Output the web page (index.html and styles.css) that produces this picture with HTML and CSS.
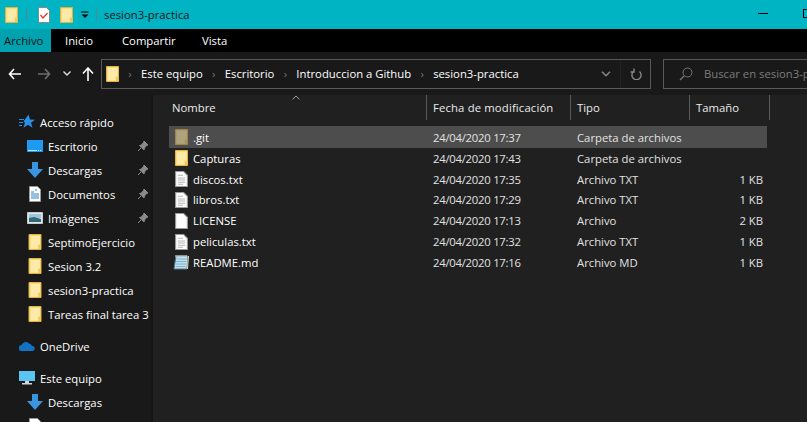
FILE: index.html
```html
<!DOCTYPE html>
<html lang="es">
<head>
  <meta charset="UTF-8">
  <title>sesion3-practica</title>
  <link rel="stylesheet" href="styles.css">
</head>
<body>

<svg class="defs" width="0" height="0">
  <symbol id="folder" viewBox="0 0 13 16">
    <path d="M.5.5h12v15H.5z" fill="#fbdc7c" stroke="#e0b545"/>
    <path d="M2 2h9.500v8H9.500v4.500H2z" fill="#fdeaa8"/>
    <path d="M10 11h2.500v4H10z" fill="#f2c95b"/>
  </symbol>
  <symbol id="txt" viewBox="0 0 12 15">
    <path d="M.5.5h7.500l3.500 3.500v10.500H.5z" fill="#fff" stroke="#9a9a9a"/>
    <path d="M2.500 4h5M2.500 6.500h7M2.500 8.500h7M2.500 10.500h7M2.500 12.500h5" stroke="#b5b5b5"/>
  </symbol>
  <symbol id="blank" viewBox="0 0 12 15">
    <path d="M.5.5h7.500l3.500 3.500v10.500H.5z" fill="#fff" stroke="#9a9a9a"/>
  </symbol>
  <symbol id="notepad" viewBox="0 0 16 16">
    <path d="M3 2h12l-1 13H1z" fill="#bfe0ee" stroke="#57768a"/>
    <path d="M3.500 5h10M3 7.500h10M3 10h10M2.500 12.500h10" stroke="#7fb2cc"/>
    <path d="M3 1v2M5 1v2M7 1v2M9 1v2M11 1v2M13 1v2" stroke="#ddd"/>
    <path d="M14 15l1-13h1l-1 13z" fill="#e8d9a8"/>
  </symbol>
  <symbol id="pin" viewBox="0 0 12 12">
    <path d="M7 1l4 4-1.500.5L7.500 8 7 10 2.500 5.500 4.500 5 6.500 2.500zM4 8l-3 3" fill="#8a8a8a" stroke="#8a8a8a"/>
  </symbol>
  <symbol id="down" viewBox="0 0 16 16">
    <path d="M5 0h6v7h5l-8 9-8-9h5z" fill="#3a95e0"/>
  </symbol>
</svg>

<header class="titlebar">
  <svg class="qa-icon"><use href="#folder"/></svg>
  <span class="qa-sep"></span>
  <svg class="qa-check" viewBox="0 0 12 16" width="12" height="16">
    <path d="M.5.5h8l3 3v12H.5z" fill="#fff" stroke="#888"/>
    <path d="M2.500 8l2.500 3 4.500-5" fill="none" stroke="#d8402a" stroke-width="1.300"/>
  </svg>
  <svg class="qa-icon qa-second"><use href="#folder"/></svg>
  <svg class="qa-drop" viewBox="0 0 8 8" width="8" height="8">
    <path d="M0 1h7.500" stroke="#000"/><path d="M.5 3.500h7L4 7z" fill="#000"/>
  </svg>
  <span class="qa-sep qa-sep-last"></span>
  <span class="title-text">sesion3-practica</span>
  <div class="win-btns">
    <span class="win-min"></span>
    <span class="win-max"></span>
  </div>
</header>

<nav class="tabs">
  <a class="tab tab-file">Archivo</a>
  <a class="tab tab-inicio">Inicio</a>
  <a class="tab tab-compartir">Compartir</a>
  <a class="tab">Vista</a>
</nav>

<div class="navbar">
  <svg class="nav-arrow" viewBox="0 0 13 12" width="13" height="12"><path d="M6 1L1.500 6 6 11M2 6h11" fill="none" stroke="#fff" stroke-width="1.600"/></svg>
  <svg class="nav-arrow nav-next" viewBox="0 0 13 12" width="13" height="12"><path d="M7 1l4.500 5L7 11M11 6H0" fill="none" stroke="#6e6e6e" stroke-width="1.600"/></svg>
  <svg class="nav-drop" viewBox="0 0 8 5" width="8" height="5"><path d="M.5.500L4 4 7.500.500" fill="none" stroke="#ddd" stroke-width="1.400"/></svg>
  <svg class="nav-up" viewBox="0 0 12 14" width="12" height="14"><path d="M1 6.500L6 1l5 5.500M6 1.500V14" fill="none" stroke="#fff" stroke-width="1.600"/></svg>

  <div class="address">
    <svg class="addr-folder"><use href="#folder"/></svg>
    <span class="crumb-sep">›</span>
    <span class="crumb">Este equipo</span>
    <span class="crumb-sep">›</span>
    <span class="crumb">Escritorio</span>
    <span class="crumb-sep">›</span>
    <span class="crumb">Introduccion a Github</span>
    <span class="crumb-sep">›</span>
    <span class="crumb">sesion3-practica</span>
    <svg class="addr-drop" viewBox="0 0 10 6" width="10" height="6"><path d="M1 .8L5 4.800 9 .8" fill="none" stroke="#888" stroke-width="1.500"/></svg>
    <span class="addr-refresh">
      <svg viewBox="0 0 12 13" width="12" height="13"><path d="M3 3.500a4.600 4.600 0 1 0 6 0M3.500 .5v3.500H0" transform="translate(.5 1)" fill="none" stroke="#888" stroke-width="1.400"/></svg>
    </span>
  </div>

  <div class="search">
    <svg viewBox="0 0 14 14" width="14" height="14"><circle cx="8.500" cy="5.500" r="4.500" fill="none" stroke="#777"/><path d="M5 9l-4 4" stroke="#6f7f6a" stroke-width="1.300"/></svg>
    <span>Buscar en sesion3-practica</span>
  </div>
</div>

<div class="main">
  <aside class="sidebar">
    <div class="nav-item lvl0 first">
      <svg class="nav-icon" viewBox="0 0 16 15"><path d="M9.500 0l1.500 5 5 .2-4 3 1.500 5-4.500-3-4.500 3 1.500-5-1.500-1.200z" fill="#2b8fe6"/><path d="M0 5h5M0 8h4M0 11h3" stroke="#2b8fe6"/></svg>
      <span>Acceso rápido</span>
    </div>
    <div class="nav-item lvl1">
      <svg class="nav-icon" viewBox="0 0 16 12"><path d="M0 0h16v12H0z" fill="#1e9bf0"/><path d="M1 10.500h14" stroke="#bfe6ff" stroke-dasharray="9 1 1 1 1"/></svg>
      <span>Escritorio</span>
      <svg class="pin"><use href="#pin"/></svg>
    </div>
    <div class="nav-item lvl1">
      <svg class="nav-icon"><use href="#down"/></svg>
      <span>Descargas</span>
      <svg class="pin"><use href="#pin"/></svg>
    </div>
    <div class="nav-item lvl1">
      <svg class="nav-icon" viewBox="0 0 16 16"><path d="M2.500.5h8l3 3v12h-11z" fill="#fff" stroke="#999"/><path d="M4 6h3M4 8h8M4 10h8M4 12h8M8 4h2" stroke="#2f7fc0"/></svg>
      <span>Documentos</span>
      <svg class="pin"><use href="#pin"/></svg>
    </div>
    <div class="nav-item lvl1">
      <svg class="nav-icon" viewBox="0 0 16 12"><path d="M.5.500h15v11H.5z" fill="#dfe7ee" stroke="#c8c8c8"/><path d="M2 2h12v4H2z" fill="#9fc4dd"/><path d="M2 6l5-1 7 2v3H2z" fill="#2f6a78"/></svg>
      <span>Imágenes</span>
      <svg class="pin"><use href="#pin"/></svg>
    </div>
    <div class="nav-item lvl1">
      <svg class="nav-icon"><use href="#folder"/></svg>
      <span>SeptimoEjercicio</span>
    </div>
    <div class="nav-item lvl1">
      <svg class="nav-icon"><use href="#folder"/></svg>
      <span>Sesion 3.2</span>
    </div>
    <div class="nav-item lvl1">
      <svg class="nav-icon"><use href="#folder"/></svg>
      <span>sesion3-practica</span>
    </div>
    <div class="nav-item lvl1">
      <svg class="nav-icon"><use href="#folder"/></svg>
      <span>Tareas final tarea 3</span>
    </div>
    <div class="nav-item lvl0 group">
      <svg class="nav-icon" viewBox="0 0 16 10"><path d="M3 10a3 3 0 0 1-.5-6A4.500 4.500 0 0 1 10 2.500 3.500 3.500 0 0 1 13 5a2.500 2.500 0 0 1 .5 5z" fill="#1273c4"/></svg>
      <span>OneDrive</span>
    </div>
    <div class="nav-item lvl0 group">
      <svg class="nav-icon" viewBox="0 0 16 14"><path d="M0 0h16v10H0z" fill="#5cc4f2"/><path d="M6 10h4v2H6zM3 12h10v1.500H3z" fill="#cfd8dc"/></svg>
      <span>Este equipo</span>
    </div>
    <div class="nav-item lvl1">
      <svg class="nav-icon"><use href="#down"/></svg>
      <span>Descargas</span>
    </div>
    <div class="nav-item lvl1">
      <svg class="nav-icon" viewBox="0 0 16 16"><path d="M2.500.5h8l3 3v12h-11z" fill="#fff" stroke="#999"/></svg>
    </div>
  </aside>

  <section class="content">
    <div class="col-head">
      <div class="col col-name">Nombre<svg class="sort" viewBox="0 0 8 5" width="8" height="5"><path d="M.5 4.500L4 1l3.500 3.500" fill="none" stroke="#999"/></svg></div>
      <div class="col col-date">Fecha de modificación</div>
      <div class="col col-type">Tipo</div>
      <div class="col col-size">Tamaño</div>
    </div>

    <div class="rows">
      <div class="row selected">
        <div class="cell-name"><svg class="file-icon dim"><use href="#folder"/></svg>.git</div>
        <div class="cell-date">24/04/2020 17:37</div>
        <div class="cell-type">Carpeta de archivos</div>
        <div class="cell-size"></div>
      </div>
      <div class="row">
        <div class="cell-name"><svg class="file-icon"><use href="#folder"/></svg>Capturas</div>
        <div class="cell-date">24/04/2020 17:43</div>
        <div class="cell-type">Carpeta de archivos</div>
        <div class="cell-size"></div>
      </div>
      <div class="row">
        <div class="cell-name"><svg class="file-icon"><use href="#txt"/></svg>discos.txt</div>
        <div class="cell-date">24/04/2020 17:35</div>
        <div class="cell-type">Archivo TXT</div>
        <div class="cell-size">1 KB</div>
      </div>
      <div class="row">
        <div class="cell-name"><svg class="file-icon"><use href="#txt"/></svg>libros.txt</div>
        <div class="cell-date">24/04/2020 17:29</div>
        <div class="cell-type">Archivo TXT</div>
        <div class="cell-size">1 KB</div>
      </div>
      <div class="row">
        <div class="cell-name"><svg class="file-icon"><use href="#blank"/></svg>LICENSE</div>
        <div class="cell-date">24/04/2020 17:13</div>
        <div class="cell-type">Archivo</div>
        <div class="cell-size">2 KB</div>
      </div>
      <div class="row">
        <div class="cell-name"><svg class="file-icon"><use href="#txt"/></svg>peliculas.txt</div>
        <div class="cell-date">24/04/2020 17:32</div>
        <div class="cell-type">Archivo TXT</div>
        <div class="cell-size">1 KB</div>
      </div>
      <div class="row">
        <div class="cell-name"><svg class="file-icon wide"><use href="#notepad"/></svg>README.md</div>
        <div class="cell-date">24/04/2020 17:16</div>
        <div class="cell-type">Archivo MD</div>
        <div class="cell-size">1 KB</div>
      </div>
    </div>
  </section>
</div>

</body>
</html>
```

FILE: styles.css
```css
html, body {
  margin: 0;
  height: 422px;
  overflow: hidden;
}

body {
  font-family: "Open Sans", "Noto Sans", sans-serif;
  font-size: 11.3px;
  background-color: #191919;
  color: #fff;
}

.defs {
  display: none;
}

/* barra de titulo */
.titlebar {
  height: 29px;
  background-color: #00b4c4;
  display: flex;
  align-items: center;
  color: #111;
  position: relative;
}

.qa-icon {
  width: 13px;
  height: 16px;
  margin-left: 5px;
}

.qa-sep {
  width: 1px;
  height: 13px;
  margin-left: 8px;
  background-color: #4f8a94;
}

.qa-check {
  margin-left: 11px;
}

.qa-second {
  margin-left: 10px;
}

.qa-drop {
  margin-left: 8px;
}

.qa-sep-last {
  margin-left: 7px;
}

.title-text {
  margin-left: 7px;
}

.win-btns {
  position: absolute;
  top: 0;
  left: 758px;
  height: 29px;
  display: flex;
  align-items: center;
  gap: 35px;
}

.win-min {
  width: 10px;
  height: 1px;
  margin-bottom: 2px;
  background-color: #000;
}

.win-max {
  width: 10px;
  height: 9px;
  margin-bottom: 2px;
  box-sizing: border-box;
  border: 1px solid #000;
}

/* pestañas */
.tabs {
  height: 23px;
  background-color: #000;
  display: flex;
}

.tab {
  line-height: 23px;
  padding: 0 0 0 14px;
}

.tab-file {
  width: 47px;
  padding: 0 0 0 4px;
  background-color: #00a2b0;
  color: #111;
}

.tab-inicio {
  width: 43px;
}

.tab-compartir {
  width: 66px;
}

/* navegacion */
.navbar {
  height: 43px;
  background-color: #191919;
  display: flex;
  align-items: center;
}

.navbar svg {
  flex-shrink: 0;
}

.nav-arrow {
  margin-left: 8px;
}

.nav-next {
  margin-left: 17px;
}

.nav-drop {
  margin-left: 12px;
}

.nav-up {
  margin-left: 11px;
}

.address {
  margin-left: 7px;
  width: 544px;
  height: 28px;
  border: 1px solid #5a5a5a;
  display: flex;
  align-items: center;
  padding-left: 4px;
  flex-shrink: 0;
}

.addr-folder {
  width: 13px;
  height: 16px;
}

.crumb-sep {
  color: #777;
  width: 22px;
  text-align: center;
}

.addr-drop {
  margin-left: auto;
}

.addr-refresh {
  width: 29px;
  height: 28px;
  margin-left: 9px;
  border-left: 1px solid #222;
  display: flex;
  align-items: center;
  justify-content: center;
}

.search {
  margin-left: 12px;
  width: 144px;
  height: 28px;
  border: 1px solid #5a5a5a;
  border-right: none;
  display: flex;
  align-items: center;
  gap: 11px;
  padding-left: 15px;
  color: #7c7c7c;
  white-space: nowrap;
  overflow: hidden;
  flex-shrink: 0;
}

/* panel izquierdo */
.main {
  display: flex;
  height: 327px;
}

.sidebar {
  width: 151px;
  flex-shrink: 0;
  background-color: #191919;
  border-right: 2px solid #151515;
  overflow: hidden;
}

.nav-item {
  height: 24px;
  display: flex;
  align-items: center;
  white-space: nowrap;
  position: relative;
}

.lvl0 {
  padding-left: 19px;
}

.lvl1 {
  padding-left: 27px;
}

.first {
  margin-top: 15px;
}

.group {
  margin-top: 8px;
}

.nav-icon {
  width: 16px;
  height: 16px;
  margin-right: 5px;
  flex-shrink: 0;
}

.pin {
  position: absolute;
  left: 137px;
  top: 6px;
  width: 12px;
  height: 12px;
}

/* lista de archivos */
.content {
  flex: 1;
  background-color: #202020;
  min-width: 0;
}

.col-head {
  height: 25px;
  display: flex;
  margin-left: 14px;
  color: #ececec;
}

.col {
  height: 25px;
  line-height: 25px;
  padding-left: 6px;
  border-right: 1px solid #5a5a5a;
  box-sizing: border-box;
  position: relative;
}

.col-name {
  width: 260px;
  padding-left: 5px;
}

.col-date {
  width: 144px;
  letter-spacing: 0.15px;
}

.col-type {
  width: 119px;
}

.col-size {
  width: 80px;
}

.sort {
  position: absolute;
  left: 125px;
  top: 0;
}

.rows {
  margin-top: 6px;
  margin-left: 16px;
  width: 598px;
}

.row {
  height: 20.8px;
  display: flex;
  align-items: center;
}

.row.selected {
  height: 22px;
  background-color: #4d4d4d;
}

.cell-name {
  width: 258px;
  display: flex;
  align-items: center;
  padding-left: 6px;
  box-sizing: border-box;
}

.cell-date {
  width: 144px;
  padding-left: 6px;
  box-sizing: border-box;
  color: #e2e2e2;
  letter-spacing: -0.25px;
}

.cell-type {
  width: 120px;
  padding-left: 6px;
  box-sizing: border-box;
  color: #e2e2e2;
}

.cell-size {
  width: 72px;
  text-align: right;
  color: #e2e2e2;
}

.file-icon {
  width: 13px;
  height: 16px;
  margin-right: 5px;
  flex-shrink: 0;
}

.file-icon.wide {
  width: 16px;
  margin-left: -2px;
  margin-right: 4px;
}

.file-icon.dim {
  opacity: 0.55;
}
```
